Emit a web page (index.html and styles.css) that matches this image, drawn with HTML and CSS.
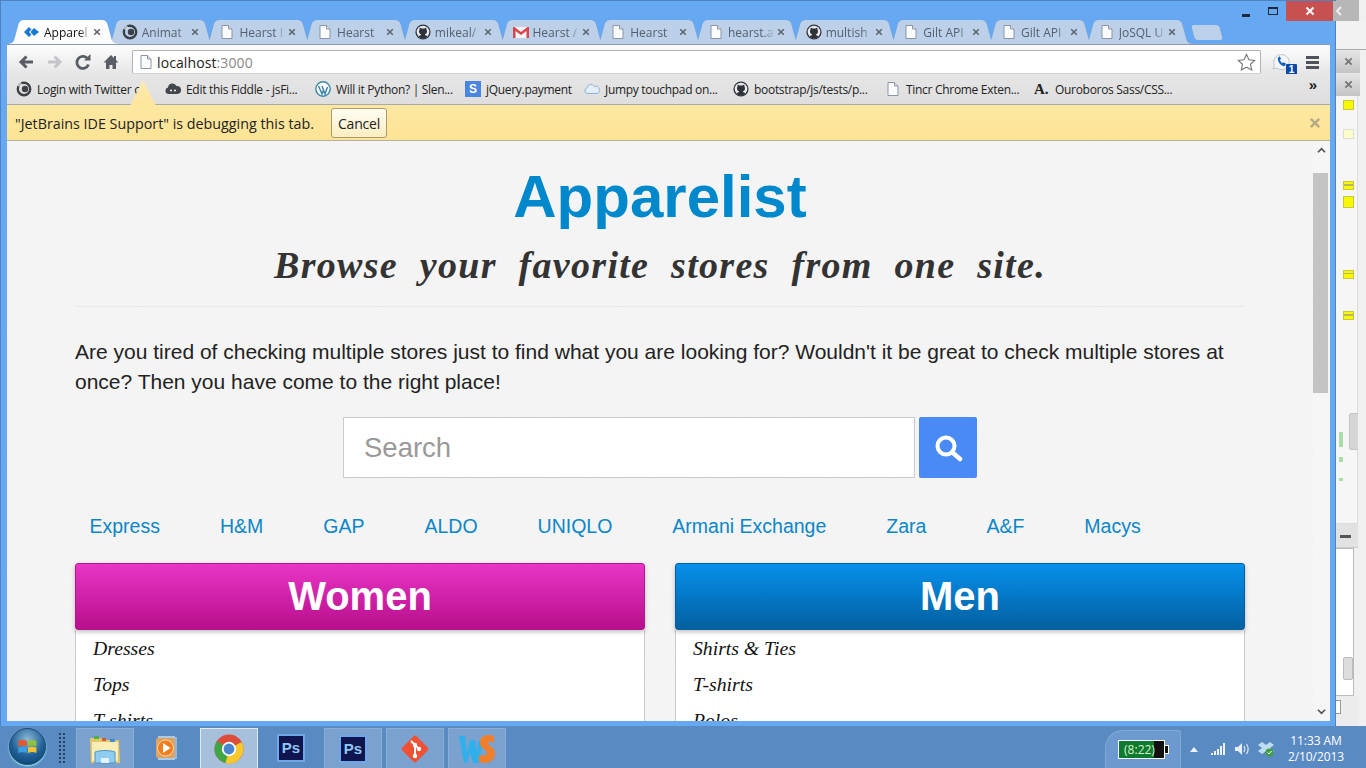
FILE: index.html
```html
<!DOCTYPE html>
<html lang="en">
<head>
<meta charset="utf-8">
<title>Apparelist</title>
<link rel="stylesheet" href="styles.css">
</head>
<body>
<svg class="defs" width="0" height="0" aria-hidden="true">
  <defs>
    <symbol id="doc" viewBox="0 0 16 16"><path d="M3 1.500h6.500L13 5v9.500H3z" fill="#fbfcfe" stroke="#8b95a5"/><path d="M9.500 1.500V5H13" fill="#dfe4ec" stroke="#8b95a5"/></symbol>
    <symbol id="gh" viewBox="0 0 16 16"><circle cx="8" cy="8" r="7.600" fill="#2f3238"/><circle cx="8" cy="8" r="6.300" fill="#e8ecf2"/><path d="M3.400 12.600c1-1 1.700-1.300 2.600-1.300v-.9C4.600 9.800 4 8.800 4 7.300c0-.7.2-1.200.6-1.700-.1-.5-.1-1.200.1-1.800.8 0 1.400.3 1.900.8a6 6 0 0 1 2.800 0c.5-.5 1.100-.8 1.900-.8.2.6.2 1.300.1 1.800.4.5.6 1 .6 1.700 0 1.500-.6 2.500-2 3.100v.9c.9 0 1.600.3 2.600 1.300A6.500 6.500 0 0 1 8 14.500a6.500 6.500 0 0 1-4.600-1.900z" fill="#2f3238"/></symbol>
    <symbol id="ring" viewBox="0 0 16 16"><circle cx="8" cy="8" r="6.200" fill="none" stroke="#3c4148" stroke-width="2.400"/><circle cx="9" cy="8" r="3.200" fill="#3c4148"/><path d="M1 4.500 4.500 1 7 4 3.500 6z" fill="#e8ecf2" opacity=".7"/></symbol>
    <symbol id="x" viewBox="0 0 10 10"><path d="M1.500 1.500l7 7m0-7l-7 7" fill="none" stroke="currentColor" stroke-width="2"/></symbol>
  </defs>
</svg>

<div class="bgwindow">
  <div class="bg-title"></div>
  <div class="bg-gap"></div>
  <div class="bg-tab"><svg class="ico10"><use href="#x"/></svg></div>
  <div class="bg-tab"><svg class="ico10"><use href="#x"/></svg></div>
  <div class="bg-marks">
    <i class="mark mark-a"></i><i class="mark mark-b"></i><i class="mark mark-c mark-striped"></i><i class="mark mark-d"></i><i class="mark mark-e mark-striped"></i><i class="mark mark-f mark-striped"></i>
    <i class="gmark gmark-a"></i><i class="gmark gmark-b"></i><i class="gmark gmark-c"></i>
    <i class="bg-thumb"></i>
  </div>
  <div class="bg-tool"><span class="bg-tool-ico"></span></div>
  <div class="bg-box"><i class="bg-box-thumb"></i></div>
  <div class="bg-foot"><i class="bg-foot-box"></i></div>
</div>

<div class="window">
  <div class="winctl">
    <span class="ctl ctl-min"><i></i></span>
    <span class="ctl ctl-max"><i></i></span>
    <span class="ctl ctl-close"><svg class="ico12"><use href="#x"/></svg></span>
    <span class="ctl-ghost"><svg class="ghost-x" viewBox="0 0 6 10"><path d="M5 1 1 5l4 4" fill="none" stroke="#eee" stroke-width="2"/></svg></span>
  </div>

  <div class="tabstrip">
    <div class="tab tab-active">
      <svg class="fav" viewBox="0 0 16 16"><path d="M5 3 0 8l5 5 2.500-2.500L5 8l2.500-2.500zM10 4 6.500 8 10 12l5-4z" fill="#1877d6"/></svg>
      <span class="tab-title">Apparel</span><svg class="tab-x"><use href="#x"/></svg>
    </div>
    <div class="tab"><svg class="fav"><use href="#ring"/></svg><span class="tab-title">Animat</span><svg class="tab-x"><use href="#x"/></svg></div>
    <div class="tab"><svg class="fav"><use href="#doc"/></svg><span class="tab-title">Hearst I</span><svg class="tab-x"><use href="#x"/></svg></div>
    <div class="tab"><svg class="fav"><use href="#doc"/></svg><span class="tab-title">Hearst</span><svg class="tab-x"><use href="#x"/></svg></div>
    <div class="tab"><svg class="fav"><use href="#gh"/></svg><span class="tab-title">mikeal/</span><svg class="tab-x"><use href="#x"/></svg></div>
    <div class="tab">
      <svg class="fav" viewBox="0 0 16 16"><path d="M0 3h16v11H0z" fill="#f3f3f3"/><path d="M0 3v11h2.500V7L8 11l5.500-4v7H16V3h-1.500L8 8 1.500 3z" fill="#d6464f"/></svg>
      <span class="tab-title">Hearst /</span><svg class="tab-x"><use href="#x"/></svg>
    </div>
    <div class="tab"><svg class="fav"><use href="#doc"/></svg><span class="tab-title">Hearst</span><svg class="tab-x"><use href="#x"/></svg></div>
    <div class="tab"><svg class="fav"><use href="#doc"/></svg><span class="tab-title">hearst.a</span><svg class="tab-x"><use href="#x"/></svg></div>
    <div class="tab"><svg class="fav"><use href="#gh"/></svg><span class="tab-title">multish</span><svg class="tab-x"><use href="#x"/></svg></div>
    <div class="tab"><svg class="fav"><use href="#doc"/></svg><span class="tab-title">Gilt API</span><svg class="tab-x"><use href="#x"/></svg></div>
    <div class="tab"><svg class="fav"><use href="#doc"/></svg><span class="tab-title">Gilt API</span><svg class="tab-x"><use href="#x"/></svg></div>
    <div class="tab"><svg class="fav"><use href="#doc"/></svg><span class="tab-title">JoSQL U</span><svg class="tab-x"><use href="#x"/></svg></div>
    <div class="newtab"></div>
  </div>

  <div class="client">
    <div class="toolbar">
      <svg class="tb" viewBox="0 0 18 18"><path d="M16 9H5M9.500 3.500 4 9l5.500 5.500" fill="none" stroke="#5a5e64" stroke-width="3"/></svg>
      <svg class="tb" viewBox="0 0 18 18"><path d="M2 9h11M8.500 3.500 14 9l-5.500 5.500" fill="none" stroke="#c4c6c9" stroke-width="3"/></svg>
      <svg class="tb" viewBox="0 0 18 18"><path d="M14.500 11.500A6 6 0 1 1 13 5" fill="none" stroke="#5a5e64" stroke-width="2.800"/><path d="M10 7.500h6.500V1z" fill="#5a5e64"/></svg>
      <svg class="tb" viewBox="0 0 18 18"><path d="M9 2 1.500 9.500H4V16h3.500v-4h3v4H14V9.500h2.500L14 7V3h-2v2z" fill="#5a5e64"/></svg>
      <div class="omnibox">
        <svg class="omni-doc"><use href="#doc"/></svg>
        <span class="url">localhost<span class="url-port">:3000</span></span>
        <svg class="star" viewBox="0 0 20 20"><path d="M10 1.500l2.600 5.600 6 .7-4.400 4.100 1.200 6L10 15l-5.400 2.900 1.200-6L1.400 7.800l6-.7z" fill="#fff" stroke="#777" stroke-width="1.200"/></svg>
      </div>
      <div class="ext">
        <svg class="ext-ico" viewBox="0 0 24 24"><path d="M11 2a9 9 0 0 0-8 13l-2 4 5-1a9 9 0 1 0 5-16z" fill="#f3f5f8" stroke="#b4bac2"/><path d="M7 6c0 5 3 9 8 10l2-3-3-2-1.500 1C11 11 10 10 9.500 8l1.500-1-2-3z" fill="#1463c4"/></svg>
        <span class="ext-badge">1</span>
      </div>
      <div class="menu"><i></i><i></i><i></i></div>
    </div>

    <div class="bookmarks">
      <div class="bm"><svg class="fav"><use href="#ring"/></svg><span class="bm-t bm-t-clip">Login with Twitter c</span></div>
      <div class="bm"><svg class="fav" viewBox="0 0 16 16"><path d="M3.500 13a3.300 3.300 0 0 1-.5-6.500A4.500 4.500 0 0 1 11.500 5a4 4 0 0 1 1 8z" fill="#44484e"/><path d="M5 9.500h2M9 9.500h2" stroke="#eee" stroke-width="1.500"/></svg><span class="bm-t">Edit this Fiddle - jsFi...</span></div>
      <div class="bm"><svg class="fav" viewBox="0 0 16 16"><circle cx="8" cy="8" r="7.200" fill="#fff" stroke="#3f86a8" stroke-width="1.400"/><path d="M3.500 5 7 13l1.500-4-1.500-4M7 5l3 8 2.500-7" fill="none" stroke="#3f86a8" stroke-width="1.500"/></svg><span class="bm-t">Will it Python? | Slen...</span></div>
      <div class="bm"><span class="s-ico">S</span><span class="bm-t">jQuery.payment</span></div>
      <div class="bm"><svg class="fav" viewBox="0 0 16 16"><path d="M3.500 12.500a2.800 2.800 0 0 1-.5-5.500 4 4 0 0 1 7.500-1.500 3.500 3.500 0 0 1 2.500 7z" fill="#e4eef8" stroke="#8db4d8"/></svg><span class="bm-t">Jumpy touchpad on...</span></div>
      <div class="bm"><svg class="fav"><use href="#gh"/></svg><span class="bm-t">bootstrap/js/tests/p...</span></div>
      <div class="bm"><svg class="fav"><use href="#doc"/></svg><span class="bm-t">Tincr Chrome Exten...</span></div>
      <div class="bm"><span class="a-ico">A.</span><span class="bm-t">Ouroboros Sass/CSS...</span></div>
      <span class="chev">»</span>
    </div>

    <div class="arrow"></div>
    <div class="infobar">
      <span class="info-text">"JetBrains IDE Support" is debugging this tab.</span>
      <button class="cancel" type="button">Cancel</button>
      <svg class="info-x"><use href="#x"/></svg>
    </div>

    <div class="viewport">
      <main class="page">
        <div class="container">
          <header class="hero">
            <h1 class="brand">Apparelist</h1>
            <p class="tagline">Browse your favorite stores from one site.</p>
          </header>
          <p class="lead">Are you tired of checking multiple stores just to find what you are looking for? Wouldn't it be great to check multiple stores at once? Then you have come to the right place!</p>
          <form class="search">
            <input class="search-input" type="text" placeholder="Search">
            <button class="search-btn" type="button" aria-label="Search">
              <svg viewBox="0 0 30 30" class="search-ico"><circle cx="13" cy="13" r="8.500" fill="none" stroke="#fff" stroke-width="4"/><path d="M19.500 19.500 27 26" stroke="#fff" stroke-width="4.500" stroke-linecap="round"/></svg>
            </button>
          </form>
          <nav class="stores">
            <a>Express</a><a>H&amp;M</a><a>GAP</a><a>ALDO</a><a>UNIQLO</a><a>Armani Exchange</a><a>Zara</a><a>A&amp;F</a><a>Macys</a>
          </nav>
          <div class="panels">
            <section class="panel">
              <h2 class="panel-head head-women">Women</h2>
              <ul class="panel-list">
                <li>Dresses</li><li>Tops</li><li>T-shirts</li>
              </ul>
            </section>
            <section class="panel">
              <h2 class="panel-head head-men">Men</h2>
              <ul class="panel-list">
                <li>Shirts &amp; Ties</li><li>T-shirts</li><li>Polos</li>
              </ul>
            </section>
          </div>
        </div>
      </main>
      <div class="scrollbar">
        <svg class="sb-arrow" viewBox="0 0 10 8"><path d="M1 6l4-4 4 4" fill="none" stroke="#555" stroke-width="2"/></svg>
        <div class="sb-track"><div class="sb-thumb"></div></div>
        <svg class="sb-arrow" viewBox="0 0 10 8"><path d="M1 2l4 4 4-4" fill="none" stroke="#555" stroke-width="2"/></svg>
      </div>
    </div>
  </div>
</div>

<footer class="taskbar">
  <div class="orb"><svg viewBox="0 0 20 20" class="orb-logo"><path d="M2 5c2.500-1 5-1 7 0v4.500c-2-1-4.500-1-7 0z" fill="#e8572a"/><path d="M10 5c2-1 5-1 7 0v4.500c-2-1-5-1-7 0z" fill="#8ac43f"/><path d="M2 10.500c2.500-1 5-1 7 0V15c-2-1-4.500-1-7 0z" fill="#3c9fe4"/><path d="M10 10.500c2-1 5-1 7 0V15c-2-1-5-1-7 0z" fill="#f5c22f"/></svg></div>
  <div class="grip"></div>
  <div class="task task-box">
    <svg class="task-ico" viewBox="0 0 32 32"><path d="M1 5h11l2 2h16l1 23H2z" fill="#e6c66a"/><path d="M3 9h26v19H3z" fill="#fbeeb4"/><path d="M5 3h5v3H5z" fill="#45b34a"/><path d="M13 5h4v3h-4z" fill="#d9573a"/><path d="M21 6h5v3h-5z" fill="#3a8fd8"/><path d="M6 19c6-2 14-2 20 0v11H6z" fill="#8fcdf0" stroke="#4b95c8"/><path d="M12 25h8v5h-8z" fill="#e3f3fb"/></svg>
  </div>
  <div class="task">
    <svg class="task-ico" viewBox="0 0 32 32"><path d="M9 5h17v22H9z" fill="#8fb8dc"/><path d="M7 4h17v24H7z" fill="#a9cbe6"/><rect x="5" y="6" width="19" height="20" rx="2" fill="#dca264"/><circle cx="14.500" cy="16" r="8" fill="#f07d1a" stroke="#ffd9a8"/><path d="M12 11l7.500 5-7.500 5z" fill="#fff"/></svg>
  </div>
  <div class="task task-box task-on">
    <svg class="task-ico" viewBox="0 0 32 32"><circle cx="16" cy="16" r="14.500" fill="#dd4b39"/><path d="M16 16 28.500 9A14.500 14.500 0 0 1 12 30z" fill="#f7c92c"/><path d="M16 16 12.500 30A14.500 14.500 0 0 1 4 8z" fill="#3fa645"/><circle cx="16" cy="16" r="7.200" fill="#fff"/><circle cx="16" cy="16" r="5.400" fill="#4a86d0"/></svg>
  </div>
  <div class="task"><span class="ps">Ps</span></div>
  <div class="task task-box"><span class="ps">Ps</span></div>
  <div class="task task-box">
    <svg class="task-ico" viewBox="0 0 32 32"><rect x="6" y="6" width="20" height="20" rx="2" transform="rotate(45 16 16)" fill="#f05033"/><path d="M12 8l8 8M16 12v11" stroke="#fff" stroke-width="2"/><circle cx="16" cy="12" r="2.200" fill="#fff"/><circle cx="20" cy="16" r="2.200" fill="#fff"/><circle cx="16" cy="23" r="2.200" fill="#fff"/></svg>
  </div>
  <div class="task task-box">
    <svg class="task-ico task-ws" viewBox="0 0 38 32"><path d="M1 3h6l2 17 3-13h5l2 13 1-12 5 1-4 21h-6l-3-11-3 11H6z" fill="#2fb0ea"/><path d="M36 3c-9-3-15 1-14 8 .6 5 7 5 7 9 0 3-4 3-8 2v7c9 3 16-1 16-9 0-6-7-7-7-10 0-2 4-1 6 0z" fill="#f07f2c"/></svg>
  </div>
  <div class="tray">
    <div class="battery-tab"><div class="battery"><span class="battery-t">(8:22)</span></div><i class="battery-nub"></i></div>
    <i class="tray-up"></i>
    <svg class="tray-ico" viewBox="0 0 16 14"><path d="M1 11h2v2H1zM4 9h2v4H4zM7 7h2v6H7zM10 4h2v9h-2zM13 1h2v12h-2z" fill="#eef3f9"/></svg>
    <svg class="tray-ico" viewBox="0 0 16 14"><path d="M1 5h3l4-4v12L4 9H1z" fill="#e8edf3"/><path d="M10 4c1 2 1 4 0 6M12.500 2c2 3 2 7 0 10" fill="none" stroke="#dfe6ee" stroke-width="1.200"/></svg>
    <svg class="tray-ico" viewBox="0 0 16 16"><path d="M4 1 8 4l4-3 4 3-4 3 4 3-4 3-4-3-4 3-4-3 4-3-4-3z" fill="#bcdcf2"/><circle cx="11.500" cy="11.500" r="4" fill="#3f9e45"/><path d="M9.500 11.500l1.500 1.500 2.500-3" fill="none" stroke="#fff"/></svg>
    <div class="clock"><span>11:33 AM</span><span>2/10/2013</span></div>
  </div>
</footer>
</body>
</html>
```
FILE: styles.css
```css
* { box-sizing: border-box; }
html, body { margin: 0; height: 100%; }
body {
  width: 1366px; height: 768px; overflow: hidden; position: relative;
  background: #5a8ac2; font-family: "Open Sans", "Noto Sans", sans-serif;
}
.defs { position: absolute; }

/* background window on the desktop */
.bgwindow {
  position: absolute; left: 1336px; top: 0; width: 30px; height: 727px;
  background: #f0f0f0; display: flex; flex-direction: column;
}
.bg-title { height: 20px; background: #b7b7b7; margin-right: 7px; flex: none; }
.bg-gap { height: 30px; flex: none; background: #f2f2f2; border-bottom: 1px solid #aaa; }
.bg-tab {
  height: 23px; width: 24px; flex: none; color: #777; display: flex; align-items: center; justify-content: center;
  background: linear-gradient(#e6e6e6, #c4c4c4);
}
.ico10 { width: 9px; height: 9px; }
.bg-marks { position: relative; height: 428px; flex: none; background: #f6f6f6; border-right: 1px solid #ddd; margin-right: 8px; border-bottom: 1px solid #ddd; }
.mark { position: absolute; left: 7px; width: 11px; background: #f8f800; border: 1px solid #c8c840; }
.mark-a { top: 4px; height: 10px; }
.mark-b { top: 33px; height: 10px; background: #fdfdc8; border-color: #ddd; }
.mark-c { top: 85px; height: 9px; }
.mark-d { top: 100px; height: 12px; }
.mark-e { top: 174px; height: 9px; }
.mark-f { top: 215px; height: 9px; }
.mark-striped { background: linear-gradient(#f8f800 35%, #b8b860 35%, #b8b860 50%, #f8f800 50%); }
.gmark { position: absolute; left: 3px; width: 4px; background: #a8dca8; }
.gmark-a { top: 336px; height: 15px; }
.gmark-b { top: 361px; height: 5px; }
.gmark-c { top: 382px; height: 3px; }
.bg-thumb { position: absolute; left: 13px; top: 317px; width: 9px; height: 37px; background: #d6d6d6; border: 1px solid #c4c4c4; border-right: 0; border-radius: 3px 0 0 3px; }
.bg-tool { height: 24px; flex: none; background: #e2e2e2; border-bottom: 1px solid #ccc; padding: 6px 0 0 4px; margin-right: 8px; }
.bg-tool-ico { display: block; width: 11px; height: 8px; border-bottom: 3px solid #555; }
.bg-box { position: relative; height: 148px; flex: none; background: #fff; border: 1px solid #bbb; border-left: 0; margin-right: 12px; }
.bg-box-thumb { position: absolute; left: 7px; top: 108px; width: 10px; height: 23px; background: #ddd; border: 1px solid #bbb; border-radius: 2px; }
.bg-foot { flex: 1; background: #ececec; padding: 4px 0 0 0; margin-right: 8px; }
.bg-foot-box { display: block; width: 5px; height: 14px; background: #fff; border: 1px solid #999; border-left: 0; }

/* chrome window */
.window {
  position: absolute; left: 0; top: 0; width: 1336px; height: 727px;
  background: #67a8f3; border: 1px solid #4f83c0; border-bottom-color: #6a97c8;
  padding: 19px 5px 5px 6px; display: flex; flex-direction: column;
}
.winctl { position: absolute; top: 0; right: 2px; height: 20px; display: flex; align-items: stretch; }
.ctl { width: 27px; display: flex; align-items: center; justify-content: center; }
.ctl-min i { display: block; width: 8px; height: 3px; background: #1c2a3a; margin-top: 8px; }
.ctl-max i { display: block; width: 10px; height: 8px; border: 1px solid #1c2a3a; border-top-width: 2px; }
.ctl-close { width: 47px; background: #c75050; color: #fff; }
.ctl-ghost { position: absolute; left: 100%; top: 0; width: 26px; height: 20px; background: #b7b7b7; display: flex; align-items: center; padding-left: 3px; }
.ghost-x { width: 6px; height: 10px; }
.ico12 { width: 10px; height: 10px; }

.tabstrip { display: flex; height: 24px; flex: none; align-items: flex-end; position: relative; filter: drop-shadow(0 0 .6px #6f86a6); }
.tab {
  width: 112px; height: 24px; flex: none; margin-right: -14.3px; display: flex; align-items: center;
  padding: 0 0 0 17px; background: #bcd0e9; color: #55606e;
  clip-path: path("M0 24C6 24 7 21 8 17L11 6C12 1 14 0 18 0L94 0C98 0 100 1 101 6L104 17C105 21 106 24 112 24Z");
}
.tab-active { background: linear-gradient(#fff, #fbfbfb); color: #111; position: relative; z-index: 2; }
.fav { width: 16px; height: 16px; flex: none; }
.tab-title {
  width: 47px; margin-left: 4px; font-size: 12px; white-space: nowrap; overflow: hidden; flex: none;
  -webkit-mask-image: linear-gradient(90deg, #000 75%, transparent);
  mask-image: linear-gradient(90deg, #000 75%, transparent);
}
.tab-x { width: 8px; height: 8px; margin-left: 2px; color: #5e6670; flex: none; }
.newtab {
  width: 28px; height: 15px; margin: 0 0 4px 14px; flex: none; background: #bcd0e9; transform: skewX(15deg); border-radius: 3px;
}

.client { flex: 1; min-height: 0; display: flex; flex-direction: column; position: relative; background: #fff; border-radius: 2px 2px 0 0; }
.toolbar { height: 30px; flex: none; display: flex; align-items: center; padding: 4px 0 0 5px; background: linear-gradient(#fdfdfd, #e6e6e6); border-top: 1px solid #8a99ad; position: relative; }
.tb { width: 18px; height: 18px; margin: 0 5.200px; flex: none; }
.omnibox {
  position: absolute; left: 125px; top: 5px; width: 1129px; height: 24px; background: #fff;
  border: 1px solid #b2b2b2; border-bottom-color: #d0d0d0; border-radius: 2px; display: flex; align-items: center; padding: 0 4px 0 5px;
}
.omni-doc { width: 16px; height: 16px; flex: none; }
.url { margin-left: 3px; font-size: 14px; color: #222; flex: 1; letter-spacing: .1px; }
.url-port { color: #888; }
.star { width: 19px; height: 19px; flex: none; }
.ext { position: absolute; left: 1265px; top: 8px; width: 24px; height: 24px; }
.ext-ico { width: 20px; height: 20px; display: block; }
.ext-badge {
  position: absolute; left: 14px; top: 11px; width: 11px; height: 11px; background: #0b4aa8; color: #fff; font: bold 10px/11px "Liberation Sans", sans-serif; text-align: center; border-radius: 1px;
}
.menu { position: absolute; left: 1299px; top: 11px; width: 13px; display: flex; flex-direction: column; gap: 2px; }
.menu i { display: block; height: 3px; background: #50545a; }

.bookmarks {
  height: 31px; flex: none; background: linear-gradient(#e6e6e6, #dedede); border-bottom: 1px solid #a9a9a9;
  display: grid; grid-template-columns: 149px 150px 150px 119px 149px 152px 149px auto 1fr; align-items: center; padding: 0 0 0 9px; position: relative;
}
.bm { display: flex; align-items: center; gap: 5px; overflow: hidden; }
.bm-t { font-size: 12px; color: #222; white-space: nowrap; letter-spacing: -.3px; }
.bm-t-clip { width: 104px; overflow: hidden; }
.s-ico { width: 16px; height: 16px; flex: none; background: #4a86e0; color: #fff; font: bold 12px/16px "Liberation Sans", sans-serif; text-align: center; }
.a-ico { width: 16px; flex: none; font: bold 15px/16px "Liberation Serif", serif; color: #222; }
.chev { justify-self: end; margin-right: 13px; margin-top: -9px; font: bold 15px/16px "Liberation Sans", sans-serif; color: #222; }
.arrow {
  position: absolute; left: 123px; top: 36px; width: 26px; height: 26px; background: linear-gradient(#fdeab0, #fde69c);
  clip-path: polygon(50% 0, 100% 100%, 0 100%); z-index: 2;
}
.infobar {
  height: 36px; flex: none; background: linear-gradient(#fde8a2, #fde394); border-bottom: 1px solid #b5b0a0;
  display: flex; align-items: center; padding: 1px 9px 0 8px; position: relative;
}
.info-text { font-size: 14.300px; color: #222; width: 316px; white-space: nowrap; }
.cancel {
  width: 56px; height: 30px; font: 14px "Open Sans", sans-serif; letter-spacing: -.2px; color: #222; background: linear-gradient(#fffdf4, #fdeec0);
  border: 1px solid #a99b6e; border-radius: 3px; padding: 0;
}
.info-x { width: 12px; height: 12px; margin-left: auto; color: #b5ab88; }

.viewport { flex: 1; min-height: 0; display: flex; background: #f6f6f6; }
.page {
  flex: 1; min-width: 0; overflow: hidden; background-color: #f6f6f6;
  background-image: url("data:image/svg+xml,%3Csvg xmlns='http://www.w3.org/2000/svg' width='240' height='240'%3E%3Cfilter id='n'%3E%3CfeTurbulence type='fractalNoise' baseFrequency='.6' numOctaves='2'/%3E%3CfeColorMatrix values='0 0 0 0 .5 0 0 0 0 .5 0 0 0 0 .5 0 0 0 .06 0'/%3E%3C/filter%3E%3Crect width='240' height='240' filter='url(%23n)'/%3E%3C/svg%3E");
}
.container { width: 1170px; margin-left: 68px; }
.hero { text-align: center; height: 166px; border-bottom: 1px solid #e9e9e9; padding-top: 20px; }
.brand { margin: 0; font: bold 60px/72px "Liberation Sans", Arial, sans-serif; color: #0088cc; }
.tagline { margin: 10px 0 0; font: italic bold 38px/44px "Liberation Serif", serif; color: #333; word-spacing: 11px; letter-spacing: 1.300px; }
.lead { margin: 30px 0 0; font: 21px/30px "Liberation Sans", Arial, sans-serif; color: #222; }
.search { display: flex; justify-content: center; gap: 4px; margin-top: 20px; }
.search-input {
  width: 572px; height: 61px; background: #fff; border: 1px solid #ccc; padding: 1px 20px 0; font: 27.500px "Liberation Sans", Arial, sans-serif; outline: 0; color: #333;
}
.search-input::placeholder { color: #999; opacity: 1; }
.search-btn { width: 58px; height: 61px; background: #4a8af4; border: 0; border-radius: 2px; display: flex; align-items: center; justify-content: center; padding: 0; }
.search-ico { width: 30px; height: 30px; }
.stores { display: flex; gap: 31px; margin-top: 30px; height: 36px; align-items: center; }
.stores a { padding: 0 14.500px; font: 19.500px/36px "Liberation Sans", Arial, sans-serif; color: #0b86c8; white-space: nowrap; }
.panels { display: grid; grid-template-columns: 570px 570px; gap: 30px; margin-top: 19px; }
.panel-head {
  margin: 0; height: 67px; color: #fff; text-align: center; font: bold 40px/65px "Liberation Sans", Arial, sans-serif; border-radius: 3px; box-shadow: 0 2px 4px rgba(0,0,0,.25); position: relative;
}
.head-women { background: linear-gradient(#e935c6, #b70f8b); border: 1px solid #b5158e; }
.head-men { background: linear-gradient(#078fec, #02609f); border: 1px solid #04609e; }
.panel-list { margin: 0; padding: 0 17px; list-style: none; background: #fff; border: 1px solid #ccc; border-top: 0; height: 140px; font: italic 19.700px/36px "Liberation Serif", serif; color: #111; }

.scrollbar { width: 17px; flex: none; display: flex; flex-direction: column; align-items: center; background: #f6f6f6; padding-top: 6px; padding-bottom: 6px; }
.sb-arrow { width: 9px; height: 7px; flex: none; }
.sb-track { flex: 1; width: 100%; padding-top: 19px; padding-right: 2px; }
.sb-thumb { height: 220px; background: #c4c4c4; }

/* taskbar */
.taskbar {
  position: absolute; left: 0; right: 0; bottom: 0; height: 42px; background: #5a8ac2;
  display: flex; align-items: flex-end; padding-left: 9px; color: #fff;
}
.orb { width: 37px; height: 37px; border-radius: 50%; margin-bottom: 3px; background: radial-gradient(circle at 50% 30%, #8fb8d8, #1e5f96 55%, #0a3c6a); border: 1px solid #1d4970; display: flex; align-items: center; justify-content: center; box-shadow: 0 1px 2px #9fe; }
.orb-logo { width: 24px; height: 24px; }
.grip { width: 8px; height: 32px; margin: 0 10px 4px 12px; background-image: radial-gradient(#24425f 1px, transparent 1.200px); background-size: 4px 4px; }
.task { width: 58px; height: 40px; margin-right: 4px; display: flex; align-items: center; justify-content: center; flex: none; }
.task-box { background: #7ba1ce; border: 1px solid #8aaed6; border-bottom: 0; }
.task-on { background: #a6bfdb; border-color: #dfe9f4; }
.task-ico { width: 32px; height: 32px; }
.task-ws { width: 38px; }
.ps { width: 28px; height: 28px; background: #10154f; border: 2px solid #6fa8e8; color: #8ec8f4; font: bold 15px/24px "Liberation Sans", sans-serif; text-align: center; }
.tray { margin-left: auto; height: 38px; display: flex; align-items: center; position: relative; width: 261px; }
.battery-tab { width: 76px; height: 38px; background: #6c9ad0; border: 1px solid #83a9d6; border-bottom: 0; border-radius: 18px 3px 0 0; display: flex; align-items: center; padding-left: 12px; margin-right: 9px; flex: none; }
.battery { width: 47px; height: 19px; background: linear-gradient(90deg, #0e7a30 78%, #111 78%); border: 1px solid #fff; display: flex; align-items: center; justify-content: center; font: 12px "Open Sans", sans-serif; color: #d8f4c8; }
.battery-t { margin-left: -4px; }
.battery-nub { display: block; width: 4px; height: 9px; background: #111; border: 1px solid #fff; border-left: 0; flex: none; }
.tray-up { width: 0; height: 0; border: 4px solid transparent; border-bottom: 5px solid #eef3f9; border-top: 0; margin-right: 12px; flex: none; }
.tray-ico { width: 16px; height: 16px; margin-right: 8px; flex: none; }
.clock { display: flex; flex-direction: column; align-items: center; width: 66px; font: 12px/16px "Open Sans", sans-serif; margin-left: 1px; color: #fff; letter-spacing: -.1px; flex: none; }
```
